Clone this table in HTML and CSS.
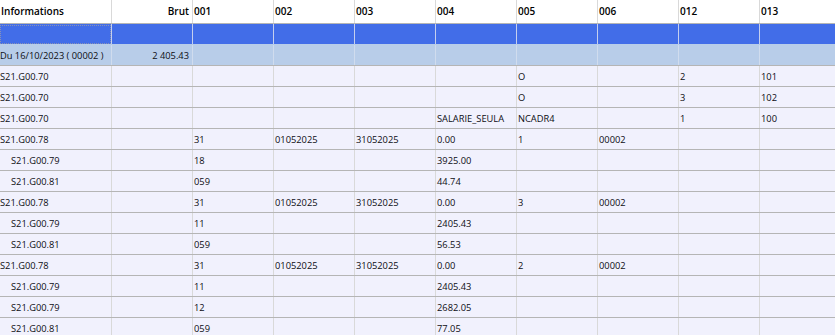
FILE: index.html
```html
<!DOCTYPE html>
<html lang="fr">
<head>
<meta charset="utf-8">
<title>Informations</title>
<link rel="stylesheet" href="styles.css">
</head>
<body>
<div class="grid">
  <div class="row head">
    <div class="c first">Informations</div><div class="c num">Brut</div><div class="c">001</div><div class="c">002</div><div class="c">003</div><div class="c">004</div><div class="c">005</div><div class="c">006</div><div class="c">012</div><div class="c">013</div>
  </div>
  <div class="row sel">
    <div class="c first"><span class="focus"></span></div><div class="c num"></div><div class="c"></div><div class="c"></div><div class="c"></div><div class="c"></div><div class="c"></div><div class="c"></div><div class="c"></div><div class="c"></div>
  </div>
  <div class="row group">
    <div class="c first">Du 16/10/2023 ( 00002 )</div><div class="c num">2 405.43</div><div class="c"></div><div class="c"></div><div class="c"></div><div class="c"></div><div class="c"></div><div class="c"></div><div class="c"></div><div class="c"></div>
  </div>
  <div class="row">
    <div class="c first">S21.G00.70</div><div class="c num"></div><div class="c"></div><div class="c"></div><div class="c"></div><div class="c"></div><div class="c">O</div><div class="c"></div><div class="c">2</div><div class="c">101</div>
  </div>
  <div class="row">
    <div class="c first">S21.G00.70</div><div class="c num"></div><div class="c"></div><div class="c"></div><div class="c"></div><div class="c"></div><div class="c">O</div><div class="c"></div><div class="c">3</div><div class="c">102</div>
  </div>
  <div class="row">
    <div class="c first">S21.G00.70</div><div class="c num"></div><div class="c"></div><div class="c"></div><div class="c"></div><div class="c">SALARIE_SEULA</div><div class="c">NCADR4</div><div class="c"></div><div class="c">1</div><div class="c">100</div>
  </div>
  <div class="row">
    <div class="c first">S21.G00.78</div><div class="c num"></div><div class="c">31</div><div class="c">01052025</div><div class="c">31052025</div><div class="c">0.00</div><div class="c">1</div><div class="c">00002</div><div class="c"></div><div class="c"></div>
  </div>
  <div class="row">
    <div class="c first sub">S21.G00.79</div><div class="c num"></div><div class="c">18</div><div class="c"></div><div class="c"></div><div class="c">3925.00</div><div class="c"></div><div class="c"></div><div class="c"></div><div class="c"></div>
  </div>
  <div class="row">
    <div class="c first sub">S21.G00.81</div><div class="c num"></div><div class="c">059</div><div class="c"></div><div class="c"></div><div class="c">44.74</div><div class="c"></div><div class="c"></div><div class="c"></div><div class="c"></div>
  </div>
  <div class="row">
    <div class="c first">S21.G00.78</div><div class="c num"></div><div class="c">31</div><div class="c">01052025</div><div class="c">31052025</div><div class="c">0.00</div><div class="c">3</div><div class="c">00002</div><div class="c"></div><div class="c"></div>
  </div>
  <div class="row">
    <div class="c first sub">S21.G00.79</div><div class="c num"></div><div class="c">11</div><div class="c"></div><div class="c"></div><div class="c">2405.43</div><div class="c"></div><div class="c"></div><div class="c"></div><div class="c"></div>
  </div>
  <div class="row">
    <div class="c first sub">S21.G00.81</div><div class="c num"></div><div class="c">059</div><div class="c"></div><div class="c"></div><div class="c">56.53</div><div class="c"></div><div class="c"></div><div class="c"></div><div class="c"></div>
  </div>
  <div class="row">
    <div class="c first">S21.G00.78</div><div class="c num"></div><div class="c">31</div><div class="c">01052025</div><div class="c">31052025</div><div class="c">0.00</div><div class="c">2</div><div class="c">00002</div><div class="c"></div><div class="c"></div>
  </div>
  <div class="row">
    <div class="c first sub">S21.G00.79</div><div class="c num"></div><div class="c">11</div><div class="c"></div><div class="c"></div><div class="c">2405.43</div><div class="c"></div><div class="c"></div><div class="c"></div><div class="c"></div>
  </div>
  <div class="row">
    <div class="c first sub">S21.G00.79</div><div class="c num"></div><div class="c">12</div><div class="c"></div><div class="c"></div><div class="c">2682.05</div><div class="c"></div><div class="c"></div><div class="c"></div><div class="c"></div>
  </div>
  <div class="row">
    <div class="c first sub">S21.G00.81</div><div class="c num"></div><div class="c">059</div><div class="c"></div><div class="c"></div><div class="c">77.05</div><div class="c"></div><div class="c"></div><div class="c"></div><div class="c"></div>
  </div>
</div>
</body>
</html>
```

FILE: styles.css
```css
html, body {
  margin: 0;
  padding: 0;
  background: #ffffff;
  overflow: hidden;
}

.grid {
  width: 835px;
  font-family: "Segoe UI", "Open Sans", "Noto Sans", sans-serif;
  font-size: 9.3px;
  color: #0d0d14;
}

.row {
  display: grid;
  grid-template-columns: 112px repeat(9, 81px);
  height: 20px;
  border-bottom: 1px solid #b5b5b5;
  background: #f1f1fd;
  line-height: 21px;
}

.c {
  border-right: 1px solid #d9d9d9;
  padding: 0 0 0 1px;
  white-space: nowrap;
  overflow: hidden;
  position: relative;
}

.c.first {
  padding-left: 0;
}

.c.sub {
  padding-left: 11px;
}

.c.num {
  text-align: right;
  padding: 0 3px 0 0;
}

.head {
  height: 23px;
  line-height: 23px;
  background: #ffffff;
  font-weight: 600;
  font-size: 10px;
  color: #000000;
}

.head .c {
  padding-left: 1px;
}

.head .c.num {
  padding: 0 3px 0 0;
}

.sel {
  background: #426de8;
  border-bottom-color: #b8cde9;
}

.sel .c {
  border-right-color: #c5cfee;
}

.focus {
  position: absolute;
  left: 0;
  top: 1px;
  right: 0;
  bottom: 0;
  border: 1px dotted #8a92b4;
}

.group {
  background: #b8cde9;
}

.group .c {
  border-right-color: #d0dcee;
}
```
